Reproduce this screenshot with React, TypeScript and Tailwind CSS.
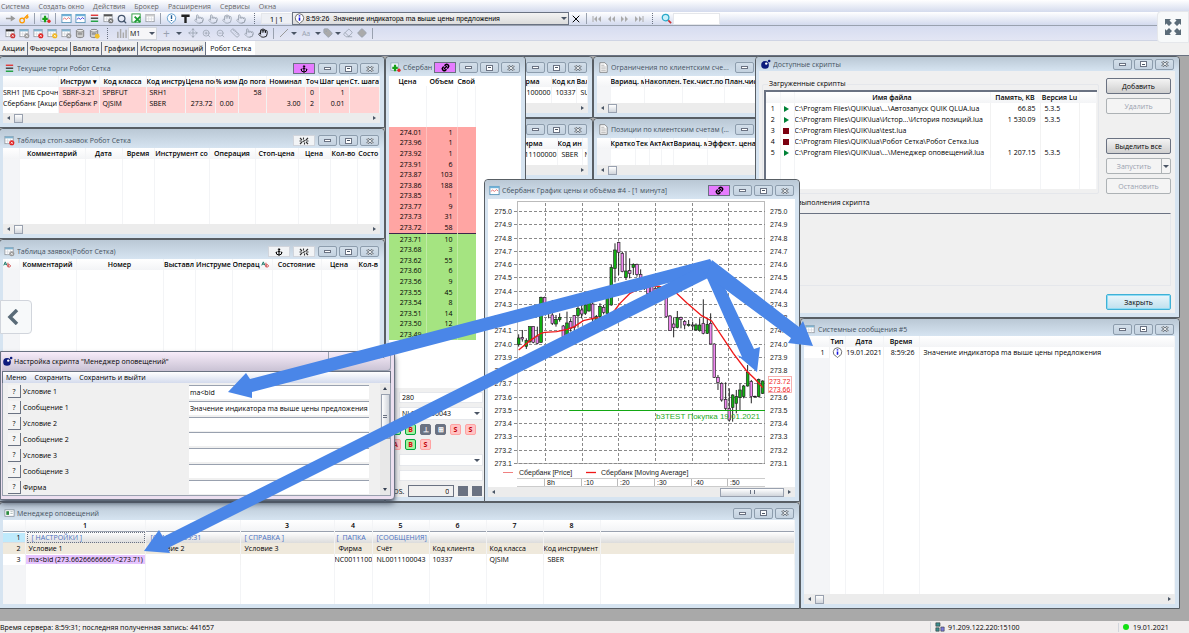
import type { ReactNode } from "react"
import clsx from "clsx"
import {
  Anchor,
  Diamond,
  Eraser,
  Hand,
  Key,
  Link2,
  Move,
  Pointer,
  Ruler,
  Search,
  Tag,
  X,
  ZoomIn,
  ZoomOut,
} from "lucide-react"

type Column = { label?: ReactNode; w?: string; cell?: string }
type Candle = [number, number, number, number, number, "g" | "p"]

/* ---------- icons ---------- */

function GridIcon({ badge, line = "#7fb2cf" }: { badge?: string; line?: string }) {
  return (
    <svg viewBox="0 0 12 12" className="size-[11px] shrink-0">
      <rect x="1" y="1.5" width="9" height="8" fill="#fff" stroke="#8a8f96" strokeWidth=".8" />
      <rect x="1" y="1.5" width="9" height="2.2" fill={line} />
      <path d="M4 4v5.5M7 4v5.5M1 6.5h9" stroke="#c9ced6" strokeWidth=".6" />
      {badge && <circle cx="8.5" cy="8.5" r="2.8" fill={badge} />}
      {badge && <path d="M7.4 7.4l2.2 2.2M9.6 7.4l-2.2 2.2" stroke="#fff" strokeWidth=".8" />}
    </svg>
  )
}

function LinesIcon() {
  return (
    <svg viewBox="0 0 12 12" className="size-[11px] shrink-0">
      <path d="M2 2.5h8" stroke="#e03c3c" strokeWidth="1.6" />
      <path d="M2 5.7h8" stroke="#444" strokeWidth="1.6" />
      <path d="M2 9h8" stroke="#27a347" strokeWidth="1.6" />
    </svg>
  )
}

function ChartIcon({ color = "#e06060" }: { color?: string }) {
  return (
    <svg viewBox="0 0 12 12" className="size-[11px] shrink-0">
      <rect x="1" y="1.5" width="10" height="9" fill="#fff" stroke="#4c8db5" strokeWidth=".9" />
      <rect x="1" y="1.5" width="10" height="2" fill="#6fb1d8" />
      <path d="M2 7l2-1.5L6 7l2-2 2 1.5" fill="none" stroke={color} strokeWidth=".9" />
    </svg>
  )
}

function PanelIcon() {
  return (
    <svg viewBox="0 0 12 12" className="size-[11px] shrink-0">
      <rect x="1" y="2" width="10" height="7" fill="#fff" stroke="#7b8894" strokeWidth=".8" />
      <rect x="2.500" y="3.500" width="3" height="4" fill="#2b8a3e" />
      <path d="M7 4h2.500M7 6h2.500" stroke="#9aa" strokeWidth=".8" />
    </svg>
  )
}

function AddIcon() {
  return (
    <svg viewBox="0 0 12 12" className="size-[11px] shrink-0">
      <rect x="1" y="1" width="8" height="8" fill="#eef6fb" stroke="#8aa3b5" strokeWidth=".8" />
      <path d="M5.5 3v7M2.5 6.5h6" stroke="#18a018" strokeWidth="2.4" />
      <circle cx="9.8" cy="9" r="1.8" fill="#e02828" />
    </svg>
  )
}

function PageIcon() {
  return (
    <svg viewBox="0 0 12 12" className="size-[11px] shrink-0">
      <path d="M2 .8h5.5L10 3.3v8H2z" fill="#fff" stroke="#6d6d6d" strokeWidth=".8" />
      <path d="M3.5 3.5H7M3.5 5.5h5M3.5 7.5h5M3.5 9.5h5" stroke="#8a8a8a" strokeWidth=".7" />
    </svg>
  )
}

function LuaIcon() {
  return (
    <svg viewBox="0 0 12 12" className="size-[11px] shrink-0">
      <circle cx="5.5" cy="6.5" r="4.2" fill="#0c1a7c" />
      <circle cx="6.8" cy="5" r="1.3" fill="#fff" />
      <circle cx="10" cy="2.2" r="1.4" fill="#0c1a7c" />
    </svg>
  )
}

function InfoIcon({ mark = "i" }: { mark?: "i" | "!" }) {
  return (
    <svg viewBox="0 0 12 12" className="size-[11px] shrink-0">
      <path d="M6 .8a4.8 4.8 0 0 1 1.5 9.3L6 11.6l-1.5-1.5A4.8 4.8 0 0 1 6 .8z" fill="#fff" stroke={mark === "i" ? "#555" : "#4d93c7"} strokeWidth=".9" />
      {mark === "i" ? (
        <path d="M6 2.5v1.3M6 4.8V8.5" stroke="#1414e0" strokeWidth="1.7" />
      ) : (
        <path d="M6 2.5v4M6 7.5v1.2" stroke="#1c5b96" strokeWidth="1.5" />
      )}
    </svg>
  )
}

function DatabaseIcon({ coin }: { coin?: boolean }) {
  return (
    <svg viewBox="0 0 12 12" className="size-[11px] shrink-0">
      <path d="M1.5 3v6c0 2 8 2 8 0V3" fill="#cfcfcf" stroke="#666" strokeWidth=".8" />
      <ellipse cx="5.5" cy="3" rx="4" ry="1.5" fill="#eee" stroke="#666" strokeWidth=".8" />
      <path d="M3 6.5h5" stroke="#666" />
      {coin && <circle cx="9" cy="9" r="2.6" fill="#f2c12e" />}
    </svg>
  )
}

function AbIcon() {
  return (
    <svg viewBox="0 0 10 8" className="h-[7px] w-[9px] shrink-0">
      <path d="M.7 5L2.5 1 4.3 5M1.4 3.7h2.2" fill="none" stroke="#1f7a6a" strokeWidth="1.1" />
      <path d="M5.5 2v5M5.5 5.5a1.4 1.4 0 1 1 0 .1" fill="none" stroke="#cc3b3b" strokeWidth="1.1" />
    </svg>
  )
}

/* ---------- shared pieces ---------- */

function Grid({ cols, rows = [], rowClass, fill }: { cols: Column[]; rows?: ReactNode[][]; rowClass?: string[]; fill?: string }) {
  return (
    <table className="h-full w-full table-fixed border-collapse bg-white">
      <thead>
        <tr className="h-[11px] bg-linear-to-b from-white to-gray-100">
          {cols.map((c, i) => (
            <th key={i} className={clsx("overflow-hidden whitespace-nowrap border-r border-gray-100 p-0 text-center font-semibold", c.w)}>
              {c.label}
            </th>
          ))}
        </tr>
      </thead>
      <tbody>
        {rows.map((row, r) => (
          <tr key={r} className={clsx("h-[11px]", rowClass?.[r])}>
            {cols.map((c, i) => (
              <td key={i} className={clsx("overflow-hidden whitespace-nowrap border-r border-black/5 p-0", c.cell)}>
                {row[i]}
              </td>
            ))}
          </tr>
        ))}
        <tr>
          {cols.map((c, i) => (
            <td key={i} className={clsx("border-r border-gray-100 p-0", i === 0 && fill, c.cell?.includes("ffd3d3") && "bg-[#ffd3d3]")} />
          ))}
        </tr>
      </tbody>
    </table>
  )
}

function ScrollBar({ end }: { end?: boolean }) {
  return (
    <div className="flex h-[10px] shrink-0 items-center gap-1 bg-[#ececec] px-1">
      <span className="border-y-2 border-r-[3px] border-y-transparent border-r-gray-600" />
      <span className={clsx("flex h-[9px] items-center justify-center border border-gray-400 bg-linear-to-b from-white to-gray-300", end ? "ml-auto w-[64px]" : "w-[9px]")}>
        {end && <span className="h-1 w-[5px] border-x border-gray-500" />}
      </span>
      <span className={clsx("border-y-2 border-l-[3px] border-y-transparent border-l-gray-600", !end && "ml-auto")} />
    </div>
  )
}

const frameButton =
  "flex h-[11px] w-[19px] items-center justify-center rounded-[2px] border border-[#8d9dad] bg-linear-to-b from-[#d3dfea] to-[#c3d1df] text-gray-600"

function FrameButtons() {
  return (
    <div className="flex shrink-0 gap-[2px]">
      <button className={frameButton} aria-label="Свернуть">
        <span className="h-[3px] w-[7px] border border-gray-500 bg-white" />
      </button>
      <button className={frameButton} aria-label="Развернуть">
        <span className="flex h-[6px] w-[7px] items-center justify-center border border-gray-500 bg-white">
          <span className="h-px w-[3px] bg-gray-600" />
        </span>
      </button>
      <button className={frameButton} aria-label="Закрыть окно">
        <svg viewBox="0 0 8 6" className="h-[6px] w-[8px]">
          <path d="M1 .5l6 5M7 .5l-6 5" stroke="#626b75" strokeWidth="2.4" />
          <path d="M1 .5l6 5M7 .5l-6 5" stroke="#fff" strokeWidth=".9" />
        </svg>
      </button>
    </div>
  )
}

function PinButton({ kind, active }: { kind: "anchor" | "link" | "unlink"; active?: boolean }) {
  return (
    <button
      aria-label="Закрепить"
      className={clsx("flex h-[11px] w-[22px] shrink-0 items-center justify-center border", active ? "border-gray-500 bg-[#e67cff]" : "border-gray-300 bg-[#f2f4f6]")}
    >
      {kind === "anchor" && <Anchor className="size-2 text-black" strokeWidth={3} />}
      {kind === "link" && <Link2 className="size-[9px] -rotate-45 text-black" strokeWidth={4} />}
      {kind === "unlink" && (
        <svg viewBox="0 0 10 8" className="h-2 w-[10px]">
          <path d="M1 1l2 2M4.5 .5v2M9 1L7 3M1 7l2-2M5.500 7.500v-2M9 7L7 5M.5 4h2M7.500 4h2M3.500 4.800l3-1.600" stroke="#333" strokeWidth="1.100" />
        </svg>
      )}
    </button>
  )
}

type FrameProps = { place: string; icon?: ReactNode; title: string; pins?: ReactNode; bar?: string; children?: ReactNode }

function Frame({ place, icon, title, pins, bar = "h-[19px] pt-[2px]", children }: FrameProps) {
  return (
    <section className={clsx("absolute flex flex-col rounded-t border border-[#585e64] bg-[#d6e4f1] pb-1 pl-[3px] pr-1", place)}>
      <header className={clsx("-ml-[3px] -mr-1 flex shrink-0 items-center gap-[2px] rounded-t bg-linear-to-b from-[#bac8d5] to-[#d6e4f1] pl-1 pr-[5px]", bar)}>
        {icon}
        <h2 className="min-w-0 flex-1 overflow-hidden whitespace-nowrap text-[#45525f]">{title}</h2>
        <div className="flex gap-[3px]">
          {pins}
          <FrameButtons />
        </div>
      </header>
      {children}
    </section>
  )
}

/* ---------- toolbars ---------- */

const menus = ["Система", "Создать окно", "Действия", "Брокер", "Расширения", "Сервисы", "Окна"]
const tabs = ["Акции", "Фьючерсы", "Валюта", "Графики", "История позиций"]
const jumps = ["В начало", "Назад", "Вперёд", "В конец"]

function Tool({ name, children }: { name: string; children: ReactNode }) {
  return (
    <button aria-label={name} className="flex w-[14px] shrink-0 items-center justify-center text-gray-400">
      {children}
    </button>
  )
}

function Divider() {
  return <span className="mx-[3px] h-[11px] w-px shrink-0 bg-gray-400" />
}

function Grip() {
  return <span className="mx-[6px] h-[11px] shrink-0 border-l border-dotted border-gray-500" />
}

function Caret() {
  return <span className="w-[6px] shrink-0 border-x-[3px] border-t-[3px] border-x-transparent border-t-gray-600" />
}

function Toolbars() {
  return (
    <div className="shrink-0 bg-[#f0f0f0]">
      <nav className="flex h-[12px] items-center gap-[9px] bg-linear-to-b from-white to-[#d4dbed] pl-px text-[#666]">
        {menus.map((m) => (
          <button key={m}>{m}</button>
        ))}
      </nav>
      <div className="flex h-[14px] items-center border-b border-gray-400 bg-linear-to-b from-white to-[#d3daee] pl-[3px]">
        <Tool name="Подключить">
          <svg viewBox="0 0 12 12" className="size-[11px]"><path d="M1 6h8M7 4l3 2-3 2z" stroke="#999" strokeWidth="1.5" fill="#999" /></svg>
        </Tool>
        <Tool name="Пароль"><Key className="size-[10px] text-amber-500" strokeWidth={3} /></Tool>
        <Divider />
        <Tool name="Новое окно"><AddIcon /></Tool>
        <Divider />
        <Tool name="График"><ChartIcon /></Tool>
        <Tool name="Диаграмма"><ChartIcon color="#2626d8" /></Tool>
        <Tool name="Список"><LinesIcon /></Tool>
        <Tool name="Фильтр"><GridIcon line="#555" badge="#777" /></Tool>
        <Tool name="Поиск в таблице"><Search className="size-[10px] text-slate-600" strokeWidth={3} /></Tool>
        <Tool name="Экспорт">
          <svg viewBox="0 0 12 12" className="size-[11px]"><rect x="1" y="1" width="9" height="9" fill="#fff" stroke="#2b9b3d" /><path d="M4 4l6 6M10 4l-6 6" stroke="#1d9c33" strokeWidth="2" /></svg>
        </Tool>
        <Tool name="Копия"><GridIcon line="#ccc" /></Tool>
        <Divider />
        <Tool name="Сообщение"><InfoIcon mark="!" /></Tool>
        <Tool name="Текст">
          <svg viewBox="0 0 12 12" className="size-[11px]"><path d="M1.5 3h9M6 3v8" stroke="#222" strokeWidth="2.6" /></svg>
        </Tool>
        <Tool name="Заявка"><Pointer className="size-[10px]" /></Tool>
        <Tool name="Снять заявку"><Pointer className="size-[10px]" /></Tool>
        <Tool name="Снять все"><Hand className="size-[10px]" /></Tool>
        <Tool name="Стоп-заявка"><Pointer className="size-[10px]" /></Tool>
        <Grip />
        <span className="w-[31px] shrink-0 border border-gray-200 bg-[#eef0f5] text-center text-[8px]">1|1</span>
        <div className="flex h-[13px] w-[277px] shrink-0 items-center gap-px border border-gray-500 bg-linear-to-b from-[#f3f3f3] to-[#dcdcdc] px-px">
          <InfoIcon />
          <select aria-label="Последнее сообщение" className="flex-1 appearance-none font-[Liberation_Sans]">
            <option>8:59:26&nbsp; Значение индикатора ma выше цены предложения</option>
          </select>
          <Caret />
        </div>
        <Tool name="Очистить"><X className="size-[12px] text-black" /></Tool>
        <Divider />
        {jumps.map((name, i) => (
          <Tool key={name} name={name}>
            <svg viewBox="0 0 10 6" className={clsx("h-[6px] w-[10px]", i > 1 && "rotate-180")}>
              <path d="M5 0v6L2 3zM9 0v6L6 3z" fill="#aaa" />
              {i % 3 === 0 && <path d="M1 0v6" stroke="#aaa" />}
            </svg>
          </Tool>
        ))}
        <Grip />
        <Tool name="Найти">
          <svg viewBox="0 0 12 12" className="size-[11px]"><circle cx="5" cy="5" r="3.600" fill="#c8f1fb" stroke="#2aa9c9" strokeWidth="1.400" /><path d="M8 8l3 3" stroke="#c33" strokeWidth="1.800" /></svg>
        </Tool>
        <input aria-label="Поиск" className="h-[12px] w-[47px] border border-gray-200 bg-white" />
      </div>
      <div className="flex h-[15px] items-center border-b border-[#cfd4e4] bg-linear-to-b from-[#d6dcf0] to-[#e3e6f4] pl-[3px]">
        <Tool name="Заявки"><GridIcon badge="#c33" line="#333" /></Tool>
        <Tool name="Таблица сделок"><GridIcon badge="#999" /></Tool>
        <Tool name="Стоп-заявки"><GridIcon badge="#e02222" /></Tool>
        <Tool name="Деньги"><GridIcon badge="#f0b41c" /></Tool>
        <Tool name="Таблица"><GridIcon badge="#999" /></Tool>
        <Tool name="Хранилище"><DatabaseIcon /></Tool>
        <Tool name="Счета"><DatabaseIcon coin /></Tool>
        <Grip />
        <Tool name="Свечи">
          <svg viewBox="0 0 12 12" className="size-[11px]"><path d="M2 4v7M5 1v10M8 5v6M11 2v9" stroke="#aaa" strokeWidth="1.6" /></svg>
        </Tool>
        <div className="flex h-[13px] w-[29px] shrink-0 items-center border border-gray-300 bg-[#f6f6f8] pr-px">
          <select aria-label="Интервал" className="min-w-0 flex-1 appearance-none pl-px">
            <option>M1</option>
          </select>
          <Caret />
        </div>
        <span className="mx-[6px] text-[12px] text-gray-400">+</span>
        <Caret />
        <span className="w-1" />
        <Tool name="Сдвиг"><Move className="size-[10px]" /></Tool>
        <Tool name="Увеличить"><ZoomIn className="size-[9px]" /></Tool>
        <Tool name="Уменьшить"><ZoomOut className="size-[9px]" /></Tool>
        <Tool name="Линейка"><Ruler className="size-[10px]" /></Tool>
        <Tool name="Указатель"><Pointer className="size-[10px]" /></Tool>
        <Tool name="Рука"><Hand className="size-[10px] text-black" /></Tool>
        <Divider />
        <Tool name="Линия">
          <svg viewBox="0 0 10 10" className="size-[10px]"><path d="M1 9l8-8" stroke="#999" /></svg>
        </Tool>
        <Caret />
        <button className="mx-[5px] text-gray-400">Aa</button>
        <Caret />
        <Tool name="Метка"><Tag className="size-[10px]" fill="#aaa" /></Tool>
        <Caret />
        <Tool name="Ластик"><Eraser className="size-[10px]" /></Tool>
        <Tool name="Фигура"><Diamond className="size-[10px]" fill="#aaa" /></Tool>
        <Divider />
      </div>
      <div className="flex h-[14px] items-end">
        {tabs.map((t) => (
          <button key={t} className="h-[13px] border-r border-gray-500 px-[2px] font-semibold text-[#333]">
            {t}
          </button>
        ))}
        <button className="h-[14px] bg-white px-1">Робот Сетка</button>
      </div>
    </div>
  )
}

/* ---------- tables on the left ---------- */

const tallBar = "h-[19px] pt-1"

const tradeCols: Column[] = [
  { w: "w-[55px]" },
  { w: "w-[41px]", label: "Инструм ▾", cell: "bg-[#ffd3d3]" },
  { w: "w-[47px]", label: "Код класса", cell: "bg-[#ffd3d3] pl-[3px]" },
  { w: "w-[39px]", label: "Код инстру", cell: "bg-[#ffd3d3] pl-[3px]" },
  { w: "w-[30px]", label: "Цена пос", cell: "bg-[#ffd3d3] pr-[2px] text-right" },
  { w: "w-[23px]", label: "% изм", cell: "bg-[#ffd3d3] pr-1 text-right" },
  { w: "w-[28px]", label: "До пога", cell: "bg-[#ffd3d3] pr-1 text-right" },
  { w: "w-[39px]", label: "Номинал", cell: "bg-[#ffd3d3] pr-1 text-right" },
  { w: "w-[14px]", label: "Точ", cell: "bg-[#ffd3d3] text-center" },
  { w: "w-[30px]", label: "Шаг цен", cell: "bg-[#ffd3d3] pr-1 text-right" },
  { label: "Ст. шага", cell: "bg-[#ffd3d3]" },
]

const tradeRows = [
  ["SRH1 [МБ Срочн", <span className="pl-1">SBRF-3.21</span>, "SPBFUT", "SRH1", "", "", "58", "", "0", "1"],
  ["Сбербанк [Акци", "Сбербанк Р", "QJSIM", "SBER", "273.72", "0.00", "", "3.00", "2", "0.01"],
]

const stopCols: Column[] = [
  { w: "w-[16px]" },
  { w: "w-[66px]", label: "Комментарий" },
  { w: "w-[37px]", label: "Дата" },
  { w: "w-[32px]", label: "Время" },
  { w: "w-[55px]", label: "Инструмент со" },
  { w: "w-[46px]", label: "Операция" },
  { w: "w-[43px]", label: "Стоп-цена" },
  { w: "w-[32px]", label: "Цена" },
  { w: "w-[27px]", label: "Кол-во" },
  { label: "Состо" },
]

const orderCols: Column[] = [
  { w: "w-[16px]", label: <AbIcon /> },
  { w: "w-[57px]", label: "Комментарий" },
  { w: "w-[87px]", label: "Номер" },
  { w: "w-[32px]", label: "Выставл" },
  { w: "w-[37px]", label: "Инструме" },
  { w: "w-[40px]", label: <span className="flex items-center gap-px">Операц<AbIcon /></span> },
  { w: "w-[49px]", label: "Состояние" },
  { w: "w-[36px]", label: "Цена" },
  { label: "Кол-в" },
]

/* ---------- order book ---------- */

const asks = [
  ["274.01", 1], ["273.96", 1], ["273.92", 1], ["273.91", 6], ["273.87", 103],
  ["273.86", 188], ["273.85", 1], ["273.77", 9], ["273.73", 31], ["273.72", 58],
]
const bids = [
  ["273.71", 10], ["273.68", 3], ["273.62", 55], ["273.60", 6], ["273.56", 9],
  ["273.55", 45], ["273.54", 8], ["273.51", 14], ["273.50", 12], ["273.49", ""],
]

const badgeColors = {
  green: "border-green-600 bg-[#a6f0a0] text-red-600",
  pink: "border-red-300 bg-[#ffc4c4] text-red-700",
  gray: "border-gray-500 bg-gray-500 text-white",
}

function OrderBadge({ text, color }: { text: string; color: keyof typeof badgeColors }) {
  return <button className={clsx("flex h-[11px] w-[11px] items-center justify-center rounded-[2px] border font-bold", badgeColors[color])}>{text}</button>
}

function OrderBook() {
  return (
    <Frame place="left-[385px] top-0 h-[446px] w-[141px]" title="Сбербанк" icon={<AddIcon />} pins={<PinButton kind="link" active />}>
      <div className="flex-1 overflow-hidden bg-white">
        <table className="h-[264px] w-[87px] table-fixed border-collapse">
          <thead>
            <tr className="h-[10px]">
              <th className="w-[37px] p-0 font-semibold">Цена</th>
              <th className="w-[31px] p-0 font-semibold">Объем</th>
              <th className="p-0 font-semibold">Свой</th>
            </tr>
          </thead>
          <tbody>
            <tr className="h-[41px]">
              <td className="border-r border-gray-100" />
              <td className="border-r border-gray-100" />
              <td className="border-r border-gray-100" />
            </tr>
            {[...asks, ...bids].map(([price, qty], i) => (
              <tr key={price} className={clsx(i < 10 ? "bg-[#ffa5a3]" : "bg-[#a5e481]", i === 10 && "border-t border-[#3b2449]")}>
                <td className="border-r border-white/30 p-0 pr-1 text-right">{price}</td>
                <td className="border-r border-white/30 p-0 pr-1 text-right">{qty}</td>
                <td className="p-0" />
              </tr>
            ))}
          </tbody>
        </table>
      </div>
      <div className="flex h-[109px] shrink-0 flex-col gap-1 bg-[#f0f0f0] pl-[10px] pr-[38px] pt-1">
        <div className="flex h-[11px] items-center border border-gray-200 bg-white px-[2px]">
          <input aria-label="Цена" defaultValue="280" className="w-1/2" />
          <input aria-label="Количество" defaultValue="2" className="w-1/2 pl-4" />
        </div>
        <div className="flex h-[13px] items-center border border-gray-200 bg-white px-[2px]">
          <select aria-label="Счёт" className="min-w-0 flex-1 appearance-none">
            <option>NL0011100043</option>
          </select>
          <Caret />
        </div>
        <div className="-ml-[9px] flex gap-1">
          <OrderBadge text="B" color="green" />
          <OrderBadge text="B" color="green" />
          <OrderBadge text="⊥" color="gray" />
          <OrderBadge text="⊞" color="gray" />
          <OrderBadge text="S" color="pink" />
          <OrderBadge text="S" color="pink" />
        </div>
        <div className="-ml-[9px] flex gap-1">
          <OrderBadge text="A" color="pink" />
          <OrderBadge text="B" color="green" />
          <OrderBadge text="S" color="pink" />
        </div>
        <div className="flex h-[12px] items-center border border-gray-200 bg-white px-[2px]">
          <select aria-label="Код клиента" className="min-w-0 flex-1 appearance-none" />
          <Caret />
        </div>
        <input aria-label="Комментарий" className="h-[11px] w-full shrink-0 border border-gray-200 bg-white" />
        <label className="-ml-[10px] -mr-[2px] flex items-center gap-1">
          POS.
          <input defaultValue="0" className="h-[12px] w-[46px] border border-gray-500 bg-[#f0f0f0] pr-1 text-right" />
          <span className="size-[10px] shrink-0 bg-gray-500" />
          <span className="size-[10px] shrink-0 bg-gray-500" />
        </label>
      </div>
    </Frame>
  )
}

/* ---------- price chart ---------- */

// x, body top, body bottom, wick top, wick bottom, colour
const candles: Candle[] = [
  [116, 489, 508, 478, 515, "g"], [127, 488, 492, 465, 500, "p"], [139, 497, 514, 490, 522, "g"], [150, 455, 500, 455, 505, "g"],
  [160, 455, 502, 455, 505, "p"], [172, 483, 505, 455, 508, "p"], [183, 367, 502, 365, 503, "g"], [194, 367, 400, 365, 410, "p"],
  [206, 395, 415, 385, 430, "p"], [217, 420, 445, 375, 450, "p"], [228, 433, 447, 420, 455, "g"], [239, 427, 434, 415, 440, "g"],
  [250, 453, 485, 450, 486, "p"], [261, 444, 478, 410, 490, "g"], [272, 440, 460, 430, 470, "p"], [283, 422, 458, 420, 468, "p"],
  [294, 400, 422, 390, 458, "g"], [305, 405, 417, 385, 430, "p"], [316, 390, 415, 380, 420, "g"], [327, 380, 408, 376, 410, "g"],
  [338, 387, 432, 375, 440, "p"], [349, 425, 440, 420, 444, "g"], [360, 395, 425, 385, 440, "g"], [371, 397, 412, 390, 418, "p"],
  [382, 370, 415, 360, 420, "g"], [394, 277, 390, 270, 392, "g"], [405, 225, 280, 205, 322, "g"], [416, 202, 232, 200, 300, "p"],
  [427, 235, 290, 230, 292, "p"], [438, 288, 307, 230, 315, "g"], [449, 287, 296, 250, 310, "p"], [460, 268, 277, 265, 300, "g"],
  [471, 268, 298, 266, 305, "p"], [482, 298, 320, 283, 325, "p"], [493, 320, 340, 315, 345, "p"], [504, 335, 355, 330, 360, "p"],
  [515, 335, 355, 330, 358, "p"], [526, 340, 360, 335, 362, "p"], [537, 335, 345, 332, 350, "g"], [548, 340, 370, 336, 375, "p"],
  [559, 365, 425, 363, 427, "p"], [570, 423, 467, 420, 468, "p"], [581, 447, 458, 427, 487, "p"], [592, 428, 458, 408, 460, "g"],
  [603, 428, 433, 425, 460, "p"], [614, 440, 450, 435, 463, "p"], [626, 448, 452, 435, 455, "g"], [638, 450, 453, 440, 465, "p"],
  [648, 450, 465, 445, 468, "g"], [659, 450, 467, 430, 470, "g"], [670, 445, 475, 373, 478, "p"], [682, 448, 475, 428, 477, "g"],
  [692, 445, 507, 415, 508, "p"], [703, 507, 607, 505, 609, "p"], [714, 607, 622, 600, 645, "p"], [725, 625, 675, 622, 680, "p"],
  [737, 673, 700, 622, 708, "p"], [748, 700, 735, 640, 740, "p"], [758, 660, 697, 658, 740, "g"], [769, 665, 685, 645, 715, "g"],
  [780, 645, 668, 625, 705, "g"], [791, 633, 665, 630, 670, "g"], [803, 592, 633, 570, 635, "g"], [814, 620, 665, 615, 685, "p"],
  [825, 664, 666, 662, 667, "p"], [836, 613, 665, 611, 667, "g"], [848, 618, 655, 616, 657, "g"],
]

const average =
  "116,525 150,497 183,475 194,472 230,470 261,463 283,455 310,437 349,428 380,435 405,405 420,385 450,355 500,330 540,335 590,355 620,383 665,422 695,438 730,490 760,535 800,588 825,612 848,638"

const levels = Array.from({ length: 20 }, (_, i) => ({ label: (275 - i / 10).toFixed(1), y: Math.round(211 + i * 13.26) }))
const times = [
  { x: 545, label: "8h" },
  { x: 582, label: ":10" },
  { x: 618, label: ":20" },
  { x: 655, label: ":30" },
  { x: 692, label: ":40" },
  { x: 728, label: ":50" },
]

function PriceChart() {
  return (
    <Frame place="left-[484px] top-[123px] h-[323px] w-[316px]" title="Сбербанк График цены и объёма #4 - [1 минута]" icon={<ChartIcon />} pins={<PinButton kind="link" active />}>
      <svg viewBox="488 199 307 288" className="min-h-0 w-full flex-1 bg-white font-[Liberation_Sans] text-[7px]">
        <rect x="517.5" y="201.5" width="247" height="262" fill="none" stroke="#bbb" />
        {levels.map(({ label, y }) => (
          <g key={label}>
            <path d={`M514 ${y}.5h251`} stroke="#8a8a8a" strokeDasharray="3 2" />
            <text x="512" y={y + 3} textAnchor="end" fill="#222">{label}</text>
            <text x="770" y={y + 3} fill="#222">{label}</text>
          </g>
        ))}
        {times.map(({ x, label }) => (
          <g key={label}>
            <path d={`M${x}.5 203V464`} stroke="#8a8a8a" strokeDasharray="3 2" />
            <path d={`M${x - 1}.5 478v9`} stroke="#bbb" />
            <text x={x + 2} y="485" fill="#222">{label}</text>
          </g>
        ))}
        <path d="M517 478.5h248M517 486.5h248" stroke="#ccc" fill="none" />
        <g transform="translate(480 175) scale(.3333)">
          {candles.map(([x, top, bottom, high, low, c]) => (
            <g key={x}>
              <path d={`M${x} ${high}V${low}`} stroke="#222" strokeWidth="3" />
              <rect x={x - 4} y={top} width="8" height={bottom - top} fill={c === "g" ? "#12b012" : "#f08af0"} stroke="#222" strokeWidth="2" />
            </g>
          ))}
          <polyline points={average} fill="none" stroke="#f01818" strokeWidth="4" />
        </g>
        <path d="M569 410.5h196" stroke="#13a813" strokeWidth="1.200" />
        <text x="656" y="419" fill="#1faa1f" className="text-[8px]">b3TEST Покупка 19.01.2021</text>
        <rect x="768.5" y="376.5" width="23" height="16" fill="#fff" stroke="#f3a0a0" strokeWidth=".8" />
        <text x="769" y="384" fill="#f01818">273.72</text>
        <text x="769" y="392" fill="#f01818">273.66</text>
        <path d="M503 472.5h10" stroke="#f08080" />
        <text x="519" y="475" fill="#222">Сбербанк [Price]</text>
        <path d="M586 472.5h10" stroke="#f01818" strokeWidth="1.300" />
        <text x="601" y="475" fill="#222">Сбербанк [Moving Average]</text>
      </svg>
      <ScrollBar end />
    </Frame>
  )
}

/* ---------- scripts ---------- */

const play = <span className="ml-[3px] block size-0 border-y-[3px] border-l-[5px] border-y-transparent border-l-green-700" />
const stop = <span className="ml-[2px] block size-[6px] bg-[#7c0010]" />

const scriptCols: Column[] = [
  { w: "w-[14px]", cell: "text-center" },
  { w: "w-[14px]" },
  { w: "w-[196px]", label: "Имя файла" },
  { w: "w-[50px]", label: "Память, KB", cell: "pr-1 text-right" },
  { w: "w-[39px]", label: "Версия Lu", cell: "pl-1" },
  {},
]

const scriptRows = [
  ["1", play, "C:\\Program Files\\QUIK\\lua\\...\\Автозапуск QUIK QLUA.lua", "66.85", "5.3.5"],
  ["2", play, "C:\\Program Files\\QUIK\\lua\\Истор...\\История позиций.lua", "1 530.09", "5.3.5"],
  ["3", stop, "C:\\Program Files\\QUIK\\lua\\test.lua"],
  ["4", stop, "C:\\Program Files\\QUIK\\lua\\Робот Сетка\\Робот Сетка.lua"],
  ["5", play, "C:\\Program Files\\QUIK\\lua\\...\\Менеджер оповещений.lua", "1 207.15", "5.3.5"],
]

const scriptButton = "flex h-4 w-full items-center justify-center rounded-[2px] border"
const enabled = "border-gray-500 bg-linear-to-b from-[#f4f4f4] to-[#cfcfcf] text-black"
const disabled = "border-[#adb2b5] bg-[#f4f4f4] text-gray-400"

function Scripts() {
  return (
    <Frame place="left-[755px] top-0 h-[262px] w-[425px]" bar="h-[14px]" title="Доступные скрипты" icon={<LuaIcon />}>
      <div className="flex flex-1 flex-col bg-[#f0f0f0] pb-[3px] pl-[3px] pr-1 pt-[7px]">
        <div className="flex h-[116px] gap-[7px]">
          <fieldset className="flex min-w-0 flex-1 flex-col rounded-[2px] border border-gray-200 px-px pb-1">
            <legend className="ml-1 px-px leading-[12px]">Загруженные скрипты</legend>
            <div className="min-h-0 flex-1 border-l-2 border-t-2 border-gray-500">
              <Grid cols={scriptCols} rows={scriptRows} />
            </div>
          </fieldset>
          <div className="flex w-[65px] flex-col gap-1">
            <button className={clsx(scriptButton, enabled)}>Добавить</button>
            <button className={clsx(scriptButton, disabled)}>Удалить</button>
            <span className="flex-1" />
            <button className={clsx(scriptButton, enabled)}>Выделить все</button>
            <button className={clsx(scriptButton, disabled)}>
              <span className="flex-1 text-center">Запустить</span>
              <span className="flex h-full items-center border-l border-[#adb2b5] px-px"><Caret /></span>
            </button>
            <button className={clsx(scriptButton, disabled)}>Остановить</button>
          </div>
        </div>
        <p className="mt-1 leading-[10px]">Результат выполнения скрипта</p>
        <div className="mb-2 mt-[5px] flex-1 border border-gray-200 border-t-gray-500" />
        <button className={clsx(scriptButton, "ml-auto max-w-[65px] border-[#3fb1d6] bg-linear-to-b from-[#eaf6fb] to-[#bfe0ee] ring-1 ring-inset ring-[#8fdcf5]")}>
          Закрыть
        </button>
      </div>
    </Frame>
  )
}

/* ---------- messages and alerts ---------- */

const messageCols: Column[] = [
  { w: "w-[25px]", cell: "pr-1 text-right" },
  { w: "w-[16px]", label: "Тип" },
  { w: "w-[38px]", label: "Дата", cell: "text-center" },
  { w: "w-[36px]", label: "Время", cell: "pr-1 text-right" },
  { cell: "pl-1" },
]

const alertCols: Column[] = [
  { w: "w-[22px]", cell: "pr-1 text-right" },
  { w: "w-[120px]", label: "1", cell: "pl-[3px]" },
  { w: "w-[95px]", label: "2", cell: "pl-[5px]" },
  { w: "w-[94px]", label: "3", cell: "pl-1" },
  { w: "w-[38px]", label: "4" },
  { w: "w-[57px]", label: "5", cell: "pl-1" },
  { w: "w-[57px]", label: "6", cell: "pl-[3px]" },
  { w: "w-[57px]", label: "7", cell: "pl-[3px]" },
  { w: "w-[57px]", label: "8" },
  {},
]

const alertRows = [
  [
    <span className="-mr-1 block bg-[#bfeafc] pr-1">1</span>,
    <span className="-ml-[2px] block border border-dotted border-gray-500 pl-1 text-[#4a70c0]">[ НАСТРОЙКИ ]</span>,
    <span className="text-[#4a70c0]">[СТАРТ] 8:59:31</span>,
    <span className="text-[#4a70c0]">[ СПРАВКА ]</span>,
    <span className="pl-[2px] text-[#4a70c0]">[&nbsp; ПАПКА</span>,
    <span className="text-[#4a70c0]">[СООБЩЕНИЯ]</span>,
  ],
  ["2", "Условие 1", "Условие 2", "Условие 3", <span className="pl-1">Фирма</span>, "Счёт", "Код клиента", "Код класса", "Код инструмент"],
  ["3", <span className="-ml-[3px] block bg-[#e6c4ff] pl-[3px]">ma&lt;bid (273.66266666667&lt;273.71)</span>, "", "", "NC0011100", "NL0011100043", "10337", "QJSIM", <span className="pl-1">SBER</span>],
]

const settings = [
  ["Условие 1", "ma<bid"],
  ["Сообщение 1", "Значение индикатора ma выше цены предложения"],
  ["Условие 2", ""],
  ["Сообщение 2", ""],
  ["Условие 3", ""],
  ["Сообщение 3", ""],
  ["Фирма", ""],
]

function SettingsDialog() {
  return (
    <section className="absolute left-0 top-[295px] flex h-[149px] w-[395px] flex-col rounded-r border border-gray-500 bg-[#ecdff0] pb-[3px] pl-px pr-[3px] shadow-md shadow-gray-600">
      <header className="flex h-[19px] shrink-0 items-center gap-px bg-linear-to-b from-[#f8ecf9] to-[#c9c2d4] text-black">
        <LuaIcon />
        <h2 className="flex-1">Настройка скрипта "Менеджер оповещений"</h2>
        <div className="flex h-full w-[63px] items-start justify-end rounded-b border border-t-0 border-gray-400 pr-1">
          <X className="size-2 text-gray-600" />
        </div>
      </header>
      <nav className="flex h-[12px] shrink-0 items-center gap-[8px] border border-b-0 border-gray-500 bg-linear-to-b from-white to-[#d4dbed] pl-[3px]">
        <button>Меню</button>
        <button>Сохранить</button>
        <button>Сохранить и выйти</button>
      </nav>
      <div className="flex min-h-0 flex-1 border border-t-0 border-gray-400 bg-[#f0f0f0] pl-[5px] pt-px">
        <div className="grid flex-1 grid-rows-7">
          {settings.map(([label, value]) => (
            <div key={label} className="flex items-center">
              <button aria-label={"Справка: " + label} className="h-[13px] w-[13px] border-b border-r border-gray-500 bg-[#f4f4f4]">
                ?
              </button>
              <label htmlFor={label} className="ml-[2px] w-[166px]">{label}</label>
              <input id={label} defaultValue={value} className="h-[14px] w-[180px] border-t border-gray-400 bg-white px-px" />
            </div>
          ))}
        </div>
        <div className="flex w-[10px] flex-col items-center justify-between bg-[#e8e8e8] pb-1 pt-[3px]">
          <span className="border-x-2 border-b-[3px] border-x-transparent border-b-gray-700" />
          <span className="mb-auto mt-1 flex h-[45px] w-[9px] items-center justify-center border border-gray-400 bg-linear-to-r from-white to-gray-300">
            <span className="h-[3px] w-1 border-y border-gray-500" />
          </span>
          <span className="border-x-2 border-t-[3px] border-x-transparent border-t-gray-700" />
        </div>
      </div>
    </section>
  )
}

/* ---------- client limit tables, partly under other windows ---------- */

const firmCols: Column[] = [
  { w: "w-[47px]", label: "Фирма", cell: "text-right" },
  { w: "w-[25px]", label: "Код кл", cell: "pl-1" },
  { label: "Вал", cell: "pl-1" },
]
const depoCols: Column[] = [
  { w: "w-[53px]", label: "Фирма", cell: "text-right" },
  { w: "w-[25px]", label: "Код ин", cell: "pl-1" },
  { cell: "pl-[2px]" },
]
const limitCols: Column[] = [
  { w: "w-[13px]" },
  { w: "w-[34px]", label: "Вариац. м" },
  { w: "w-[38px]", label: "Накоплен." },
  { w: "w-[42px]", label: "Тек.чист.по" },
  { w: "w-[42px]", label: "План.чист.п" },
  {},
]
const positionCols: Column[] = [
  { w: "w-[13px]" },
  { w: "w-[25px]", label: "Кратко" },
  { w: "w-[14px]", label: "Тек" },
  { w: "w-[12px]", label: "Акт" },
  { w: "w-[12px]", label: "Акт" },
  { w: "w-[34px]", label: "Вариац. м" },
  { w: "w-[50px]", label: "Эффект. цена" },
  {},
]

export default function App() {
  return (
    <div className="relative flex h-screen flex-col overflow-hidden bg-[#a9a9a9] font-['Open_Sans',sans-serif] text-[7px] leading-[9px] text-black">
      <Toolbars />

      <main className="relative min-h-0 flex-1 overflow-hidden border-t border-gray-500">
        <Frame place="-left-px top-0 h-[72px] w-[386px]" bar={tallBar} title="Текущие торги Робот Сетка" icon={<LinesIcon />} pins={<PinButton kind="anchor" active />}>
          <div className="min-h-0 flex-1 overflow-hidden"><Grid cols={tradeCols} rows={tradeRows} /></div>
          <ScrollBar />
        </Frame>
        <Frame place="-left-px top-[72px] h-[111px] w-[386px]" bar={tallBar} title="Таблица стоп-заявок Робот Сетка" icon={<GridIcon badge="#e02222" />} pins={<PinButton kind="unlink" />}>
          <div className="min-h-0 flex-1 overflow-hidden"><Grid cols={stopCols} fill="bg-[#f4f5f7]" /></div>
          <ScrollBar />
        </Frame>
        <Frame
          place="-left-px top-[183px] h-[263px] w-[386px]"
          bar={tallBar}
          title="Таблица заявок(Робот Сетка)"
          icon={<GridIcon badge="#999" />}
          pins={
            <>
              <PinButton kind="anchor" />
              <PinButton kind="unlink" />
            </>
          }
        >
          <div className="min-h-0 flex-1 overflow-hidden"><Grid cols={orderCols} fill="bg-[#f4f5f7]" /></div>
          <ScrollBar />
        </Frame>

        <Frame place="left-[500px] top-0 h-[62px] w-[93px]" title="">
          <div className="min-h-0 flex-1 overflow-hidden"><Grid cols={firmCols} rows={[["NC001100000", "10337", "SU"]]} /></div>
          <ScrollBar />
        </Frame>
        <Frame place="left-[500px] top-[62px] h-[62px] w-[93px]" title="">
          <div className="min-h-0 flex-1 overflow-hidden"><Grid cols={depoCols} rows={[["NC0011100000", "SBER", "N"]]} /></div>
          <ScrollBar />
        </Frame>
        <Frame place="left-[593px] top-0 h-[62px] w-[209px]" title="Ограничения по клиентским сче..." icon={<PageIcon />}>
          <div className="min-h-0 flex-1 overflow-hidden"><Grid cols={limitCols} fill="bg-[#f4f5f7]" /></div>
          <ScrollBar />
        </Frame>
        <Frame place="left-[593px] top-[62px] h-[62px] w-[209px]" title="Позиции по клиентским счетам (..." icon={<PageIcon />}>
          <div className="min-h-0 flex-1 overflow-hidden"><Grid cols={positionCols} fill="bg-[#f4f5f7]" /></div>
          <ScrollBar />
        </Frame>

        <OrderBook />
        <Scripts />
        <Frame place="left-[800px] top-[262px] h-[291px] w-[380px]" bar="h-[17px] pt-[3px]" title="Системные сообщения #5" icon={<GridIcon />}>
          <div className="min-h-0 flex-1">
            <Grid cols={messageCols} fill="bg-[#f4f5f7]" rows={[["1", <span className="flex justify-center"><InfoIcon /></span>, "19.01.2021", "8:59:26", "Значение индикатора ma выше цены предложения"]]} />
          </div>
          <ScrollBar />
        </Frame>
        <Frame place="-left-px top-[446px] h-[107px] w-[801px]" bar="h-[17px] pt-[3px]" title="Менеджер оповещений" icon={<PanelIcon />}>
          <div className="min-h-0 flex-1">
            <Grid
              cols={alertCols}
              rows={alertRows}
              fill="bg-[#f4f5f7]"
              rowClass={["border-t border-gray-400 bg-linear-to-b from-white to-[#dcdcdc]", "bg-[#efe9dc]", ""]}
            />
          </div>
        </Frame>
        <SettingsDialog />
        <PriceChart />
      </main>

      <footer className="flex h-[12px] shrink-0 items-center bg-[#f0eded]">
        <p className="flex-1">Время сервера: 8:59:31; последняя полученная запись: 441657</p>
        <p className="flex w-[188px] items-center gap-[3px] border-l border-gray-300">
          <svg viewBox="0 0 12 12" className="ml-1 size-[10px]">
            <path d="M1 1h5v4H1zM1 7h4v4H1z" fill="#3a8f8f" stroke="#333" strokeWidth=".7" />
            <path d="M7 6h4v5H7z" fill="#7a7ae0" stroke="#333" strokeWidth=".7" />
          </svg>
          91.209.122.220:15100
        </p>
        <p className="flex w-[71px] items-center gap-1 border-l border-gray-300 pl-1">
          <span className="size-[6px] rounded-full bg-[#12e012]" />
          19.01.2021
        </p>
      </footer>

      {/* pointers from the chart to the places where the alert shows up */}
      <svg viewBox="0 0 1189 633" className="pointer-events-none absolute left-0 top-0 h-[633px] w-[1189px]" fill="#4a86e8">
        <polygon points="710,259 250,379 246,373 228,392 252,398 252,392 668,283 720,275" />
        <polygon points="700,267 163,537 159,530 144,551 170,553 168,548 708,278" />
        <polygon points="706,276 742,357 737,355 757,372 760,347 754,349 725,288 714,268" />
        <polygon points="712,260 799,327 803,321 813,346 788,343 791,338 722,287 706,277" />
      </svg>

      <button aria-label="На весь экран" className="absolute right-0 top-[11px] flex size-8 items-center justify-center rounded-l border border-gray-200 bg-[#f7f9fa]">
        <svg viewBox="0 0 16 16" className="size-4" fill="#5a6b78">
          <path d="M0 0h6L4.5 1.5 7 4 4 7 1.5 4.5 0 6zM16 0v6l-1.5-1.5L12 7 9 4l2.5-2.5L10 0zM0 16v-6l1.5 1.5L4 9l3 3-2.5 2.5L6 16zM16 16h-6l1.5-1.5L9 12l3-3 2.5 2.5L16 10z" />
        </svg>
      </button>
      <button aria-label="Назад" className="absolute left-0 top-[300px] flex h-[34px] w-8 items-center justify-center rounded-r border border-gray-300 bg-[#f7f9fa] pr-[6px]">
        <svg viewBox="0 0 12 16" className="h-4 w-3">
          <path d="M10 1L3 8l7 7" fill="none" stroke="#5a6b78" strokeWidth="3.500" />
        </svg>
      </button>
    </div>
  )
}
